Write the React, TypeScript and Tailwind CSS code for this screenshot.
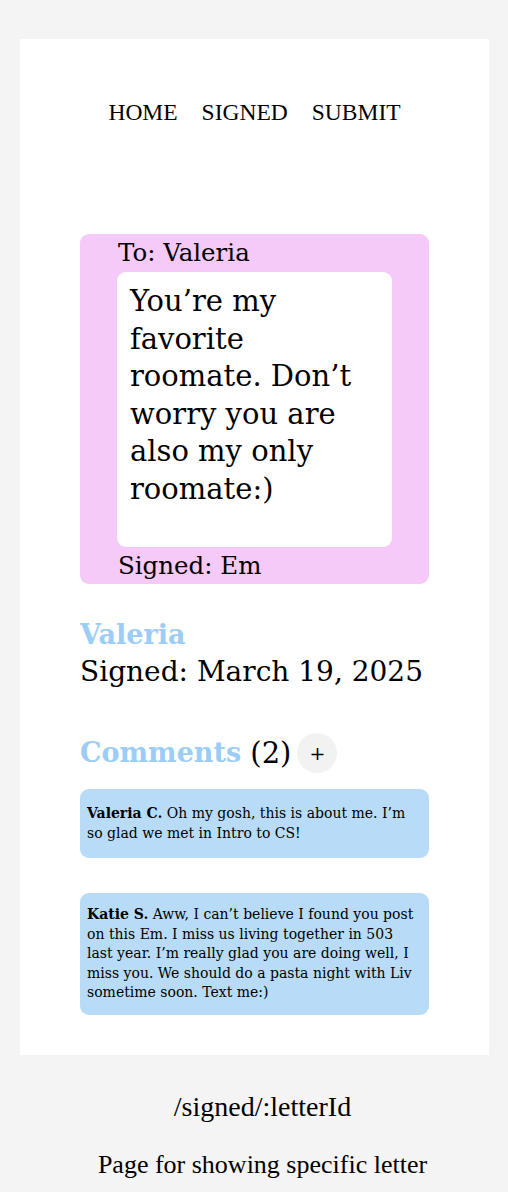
import React from "react";

export default function App() {
  return (
    <div className="min-h-[1192px] bg-[#f4f4f4] pt-[39px] pl-[20px] pr-[19px]" style={{ fontFamily: '"Liberation Serif", serif' }}>
      <div className="bg-white pb-[40px]">
        <nav className="flex justify-center gap-[24px] pt-[58px] text-[23.5px] leading-[30px] text-black">
          <span>HOME</span>
          <span>SIGNED</span>
          <span>SUBMIT</span>
        </nav>

        <div className="mx-[60px] mt-[107px] font-['DejaVu_Serif'] text-black">
          <div className="rounded-[9px] bg-[#f5c9f8] px-[37px]">
            <div className="text-[24.5px] leading-[37px] pl-[1px]">To: Valeria</div>
            <div className="mt-[1px] h-[275px] rounded-[9px] bg-white px-[13px] pt-[11px] text-[29px] leading-[37.6px] whitespace-nowrap">
              You’re my<br />favorite<br />roomate. Don’t<br />worry you are<br />also my only<br />roomate:)
            </div>
            <div className="text-[24.5px] leading-[37px] pl-[1px]">Signed: Em</div>
          </div>

          <div className="mt-[33px] text-[27px] font-bold leading-[36px] text-[#9bcdf6]">Valeria</div>
          <div className="text-[28px] leading-[38px] whitespace-nowrap">Signed: March 19, 2025</div>

          <div className="mt-[42px] flex items-center whitespace-nowrap">
            <span className="text-[27px] font-bold leading-[40px] text-[#9bcdf6]">Comments</span>
            <span className="text-[29px] leading-[40px]">&nbsp;(2)</span>
            <span className="ml-[6px] flex h-[40px] w-[40px] items-center justify-center rounded-full bg-[#f2f2f2] text-[19px] leading-none">+</span>
          </div>

          <div className="mt-[16px] rounded-[9px] bg-[#b8dcf7] px-[7px] pt-[14px] pb-[15px] text-[14px] leading-[20px] whitespace-nowrap">
            <b>Valeria C.</b> Oh my gosh, this is about me. I’m<br />so glad we met in Intro to CS!
          </div>

          <div className="mt-[35px] rounded-[9px] bg-[#b8dcf7] px-[7px] pt-[12px] pb-[12px] text-[14px] leading-[19.5px] whitespace-nowrap">
            <b>Katie S.</b> Aww, I can’t believe I found you post<br />on this Em. I miss us living together in 503<br />last year. I’m really glad you are doing well, I<br />miss you. We should do a pasta night with Liv<br />sometime soon. Text me:)
          </div>
        </div>
      </div>

      <div className="pl-[16px]">
        <div className="mt-[35px] text-center text-[28px] leading-[34px] text-black">/signed/:letterId</div>
        <div className="mt-[24px] text-center text-[26px] leading-[34px] text-black">Page for showing specific letter</div>
      </div>
    </div>
  );
}
